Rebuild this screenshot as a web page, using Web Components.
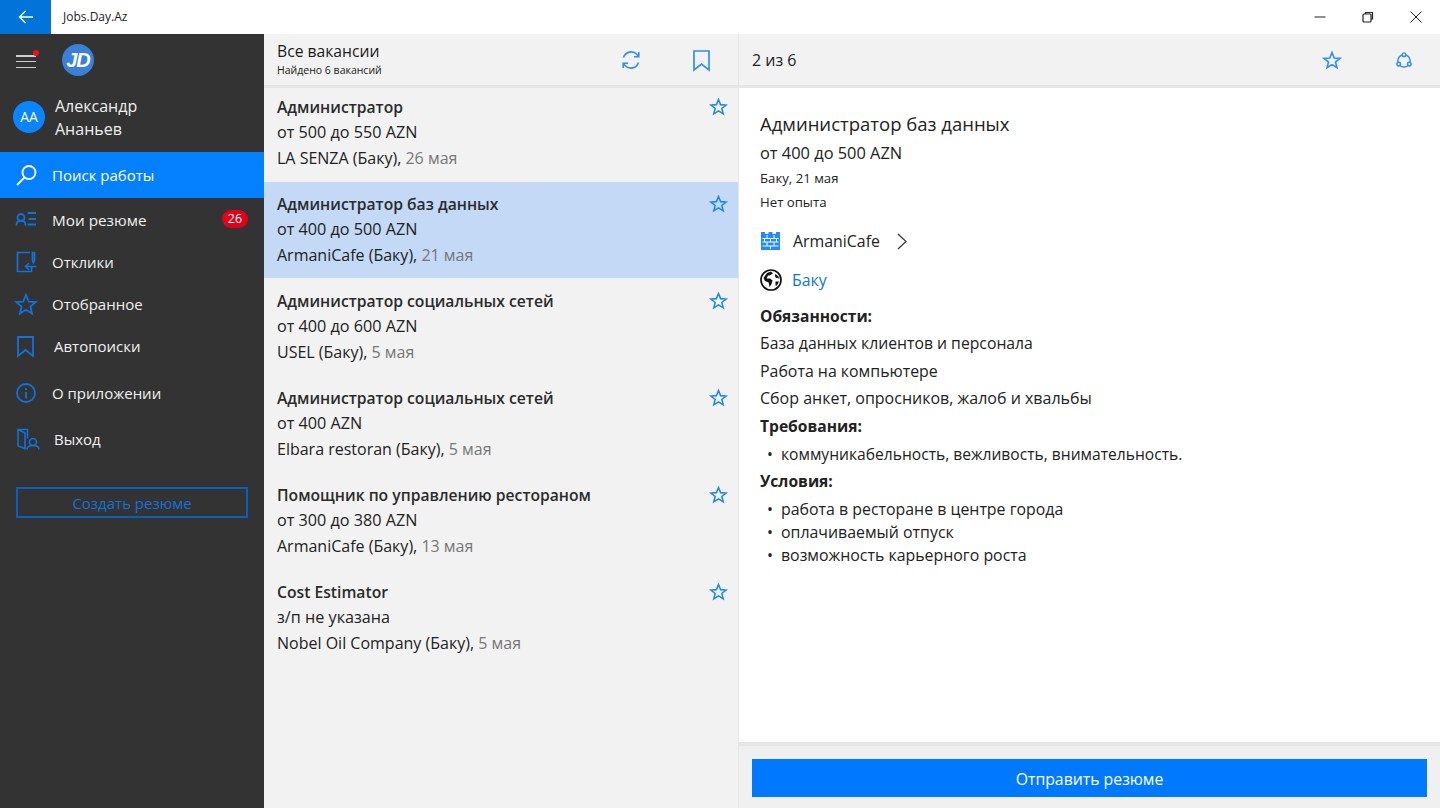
<!DOCTYPE html>
<html lang="ru">
<head>
<meta charset="utf-8">
<title>Jobs.Day.Az</title>
<style>
  html, body { margin: 0; height: 100%; overflow: hidden; background: #fff; }
  body { font-family: "Open Sans", "Noto Sans", sans-serif; color: #1a1a1a; }
</style>
</head>
<body>
<app-shell></app-shell>

<script>
const ICONS = {
  search: `<circle cx="14" cy="8.5" r="6.5"/><path d="M9.5 13.5 2 21"/>`,
  resume: `<circle cx="6" cy="8.500" r="3.500"/><path d="M1.500 16.500c0-3.500 2-5 4.500-5s4.500 1.500 4.500 5M12.500 4H21M13.500 10H21M12.500 15.500H21"/>`,
  replies: `<path d="M15 1.500H2.500v19h14v-5"/><path d="M17.500 1.500h2v8l-1 2-1-2zM21.500 15.500H10.500M14 12l-3.500 3.500L14 19"/>`,
  star: `<path d="M11 2l2.700 6.600 7.100.5-5.500 4.500 1.800 6.900L11 16.700l-6.100 3.800 1.800-6.900L1.200 9.100l7.100-.5z"/>`,
  bookmark: `<path d="M3 2h15v19l-7.500-6L3 21z"/>`,
  info: `<circle cx="11" cy="11" r="9"/><path d="M11 10v6.500M11 6v2"/>`,
  exit: `<path d="M3 18V1.500h9.500v9M3 1.500l7 3.500v15.500l-7-2.500"/><circle cx="18" cy="14" r="3.500"/><path d="M12 21.500c0-2.500 2.500-4 6-4s6 1.500 6 4"/>`,
  refresh: `<path d="M3.500 8.500A8 8 0 0 1 17 5.500l1.500 2M18.500 13.500A8 8 0 0 1 5 16.500l-1.500-2"/><path d="M18.800 3v4.800h-4.800M3.200 19v-4.800h4.800"/>`,
  share: `<circle cx="11" cy="12" r="7.500"/><circle cx="11" cy="4.500" r="2.200" fill="#f2f2f2"/><circle cx="4.500" cy="16" r="2.200" fill="#f2f2f2"/><circle cx="17.500" cy="16" r="2.200" fill="#f2f2f2"/>`,
};

class UiIcon extends HTMLElement {
  connectedCallback() {
    const size = this.getAttribute("size") || 22;
    const box = this.getAttribute("box") || 22;
    const name = this.getAttribute("name");
    this.attachShadow({ mode: "open" }).innerHTML = /* html */`
      <style>
        :host { display: inline-flex; flex: none; }
        svg { display: block; overflow: visible; fill: none; stroke: currentColor; stroke-width: ${this.getAttribute("sw") || 1.8}; }
      </style>
      <svg width="${size}" height="${size}" viewBox="0 0 ${box} ${box}">${ICONS[name]}</svg>
    `;
  }
}
customElements.define("ui-icon", UiIcon);

class TitleBar extends HTMLElement {
  connectedCallback() {
    this.attachShadow({ mode: "open" }).innerHTML = /* html */`
      <style>
        :host { display: flex; height: 34px; background: #fff; align-items: stretch; flex: none; }
        .back { width: 51px; background: #0274d9; display: flex; align-items: center; justify-content: center; }
        .title { font-size: 12px; margin-left: 12px; line-height: 34px; color: #222; flex: 1; }
        .ctl { width: 48px; display: flex; align-items: center; justify-content: center; }
        svg { display: block; fill: none; stroke: #222; }
      </style>
      <div class="back">
        <svg width="16" height="14" viewBox="0 0 16 14" style="stroke:#fff;stroke-width:1.3"><path d="M15 7H1.500M7.500 1 1.500 7l6 6"/></svg>
      </div>
      <div class="title">Jobs.Day.Az</div>
      <div class="ctl"><svg width="12" height="12" viewBox="0 0 12 12"><path d="M.5 6h11"/></svg></div>
      <div class="ctl"><svg width="12" height="12" viewBox="0 0 12 12" style="stroke-width:1.200"><rect x="1" y="3" width="8" height="8" rx="1"/><path d="M3.500 3V1.500h7V8H9"/></svg></div>
      <div class="ctl"><svg width="12" height="12" viewBox="0 0 12 12"><path d="M.5.5l11 11M11.500.5l-11 11"/></svg></div>
    `;
  }
}
customElements.define("title-bar", TitleBar);

class NavItem extends HTMLElement {
  connectedCallback() {
    this.attachShadow({ mode: "open" }).innerHTML = /* html */`
      <style>
        :host { display: flex; align-items: center; color: #f0f0f0; font-size: 15px; height: var(--h, 42px); padding-left: 15px; position: relative; }
        :host([active]) { background: #0580ff; color: #fff; }
        ::slotted([slot=icon]) { color: #1172dc; }
        :host([active]) ::slotted([slot=icon]) { color: #fff; }
        .label { margin-left: var(--gap, 15px); }
        ::slotted([slot=badge]) { position: absolute; right: 16px; top: 11px; }
      </style>
      <slot name="icon"></slot>
      <span class="label"><slot></slot></span>
      <slot name="badge"></slot>
    `;
  }
}
customElements.define("nav-item", NavItem);

class SideNav extends HTMLElement {
  connectedCallback() {
    this.attachShadow({ mode: "open" }).innerHTML = /* html */`
      <style>
        :host { display: flex; flex-direction: column; width: 264px; flex: none; background: #333; color: #eee; }
        .top { height: 52px; display: flex; align-items: center; padding-left: 16px; gap: 26px; flex: none; }
        .burger { position: relative; width: 20px; height: 13px; display: flex; flex-direction: column; justify-content: space-between; margin-top: 3px; }
        .burger i { display: block; height: 1.500px; background: #cfcfcf; }
        .burger b { position: absolute; right: -3px; top: -5px; width: 6px; height: 6px; border-radius: 50%; background: #e81123; }
        .logo { width: 32px; height: 32px; border-radius: 50%; background: #3a7fd8; color: #fff; font: italic 700 20px/32px "Liberation Sans", sans-serif; text-align: center; letter-spacing: -1px; }
        .user { height: 62px; margin-bottom: 4px; display: flex; align-items: center; padding-left: 13px; gap: 10px; font-size: 16px; line-height: 23px; flex: none; }
        .user .name { margin-top: 2px; }
        .ava { width: 32px; height: 32px; border-radius: 50%; background: #0a84ff; color: #fff; font-size: 14px; line-height: 32px; text-align: center; flex: none; }
        .nav { display: flex; flex-direction: column; }
        .create { margin: 28px 16px 0; height: 31px; border: 2px solid #0c5fb6; box-sizing: border-box; color: #1172dc; font-size: 15px; line-height: 28px; text-align: center; }
        .badge { background: #e2001a; color: #fff; font-size: 12.500px; line-height: 18px; height: 18px; width: 26px; border-radius: 9px; text-align: center; }
      </style>
      <div class="top">
        <div class="burger"><i></i><i></i><i></i><b></b></div>
        <div class="logo">JD</div>
      </div>
      <div class="user">
        <div class="ava">АА</div>
        <div class="name">Александр<br>Ананьев</div>
      </div>
      <div class="nav">
        <nav-item active style="--h:46px;--gap:14px"><ui-icon slot="icon" name="search" size="23" box="23"></ui-icon>Поиск работы</nav-item>
        <nav-item style="margin-top:1px;font-size:15.300px"><ui-icon slot="icon" name="resume"></ui-icon>Мои резюме<span slot="badge" class="badge">26</span></nav-item>
        <nav-item><ui-icon slot="icon" name="replies" sw="1.700"></ui-icon>Отклики</nav-item>
        <nav-item><ui-icon slot="icon" name="star"></ui-icon>Отобранное</nav-item>
        <nav-item style="--gap:17px"><ui-icon slot="icon" name="bookmark"></ui-icon>Автопоиски</nav-item>
        <nav-item style="--h:52px"><ui-icon slot="icon" name="info"></ui-icon>О приложении</nav-item>
        <nav-item style="--h:40px;--gap:17px"><ui-icon slot="icon" name="exit" sw="1.600"></ui-icon>Выход</nav-item>
      </div>
      <div class="create">Создать резюме</div>
    `;
  }
}
customElements.define("side-nav", SideNav);

class JobRow extends HTMLElement {
  connectedCallback() {
    const a = (n) => this.getAttribute(n);
    this.attachShadow({ mode: "open" }).innerHTML = /* html */`
      <style>
        :host { display: block; height: 96px; margin-bottom: 1px; box-sizing: border-box; padding: 10px 13px 0; position: relative; font-size: 16px; line-height: 25.500px; color: #222; }
        :host([selected]) { background: #c3d9f5; }
        .name { font-weight: 600; color: #2b2b2b; font-size: 15.700px; line-height: 25px; }
        .pay { font-size: 16.200px; }
        .date { color: #777; }
        ui-icon { position: absolute; right: 11px; top: 13px; color: #1e88f0; }
      </style>
      <div class="name">${a("name")}</div>
      <div class="pay">${a("pay")}</div>
      <div>${a("firm")} <span class="date">${a("date")}</span></div>
      <ui-icon name="star" size="17" box="22" sw="2"></ui-icon>
    `;
  }
}
customElements.define("job-row", JobRow);

class JobList extends HTMLElement {
  connectedCallback() {
    this.attachShadow({ mode: "open" }).innerHTML = /* html */`
      <style>
        :host { display: flex; flex-direction: column; width: 474px; flex: none; background: #f2f2f2; border-right: 1px solid #e6e6e6; }
        .head { height: 54px; box-sizing: border-box; margin-bottom: -3px; position: relative; z-index: 1; background: #f2f2f2; border-bottom: 3px solid #e6e6e6; display: flex; align-items: center; padding-left: 13px; flex: none; }
        .t { flex: 1; font-size: 15.700px; line-height: 19px; }
        .t small { display: block; font-size: 10.500px; line-height: 13px; margin-top: 3px; }
        .head ui-icon { color: #2f8ff5; }
        .refresh { margin-right: 49px; }
        .book { margin-right: 25px; }
      </style>
      <div class="head">
        <div class="t">Все вакансии<small>Найдено 6 вакансий</small></div>
        <ui-icon class="refresh" name="refresh" sw="1.600"></ui-icon>
        <ui-icon class="book" name="bookmark" sw="1.700"></ui-icon>
      </div>
      <slot></slot>
    `;
  }
}
customElements.define("job-list", JobList);

class JobDetail extends HTMLElement {
  connectedCallback() {
    this.attachShadow({ mode: "open" }).innerHTML = /* html */`
      <style>
        :host { display: flex; flex-direction: column; flex: 1; min-width: 0; background: #fff; color: #222; font-size: 15.900px; }
        .head { height: 54px; box-sizing: border-box; background: #f2f2f2; border-bottom: 3px solid #e6e6e6; display: flex; align-items: center; padding-left: 13px; flex: none; }
        .head span { flex: 1; font-size: 16px; }
        .head ui-icon { color: #2f8ff5; }
        .body { flex: 1; padding: 22px 21px 0; min-height: 0; }
        h1 { font-size: 18.500px; font-weight: 400; margin: 0; line-height: 28px; }
        .pay { font-size: 16.400px; line-height: 29px; margin-bottom: -1px; }
        .sm { font-size: 13.200px; line-height: 24px; }
        .link { display: flex; align-items: center; height: 40px; gap: 12px; }
        .blue { color: #0f75d9; }
        h2 { font-size: 15.600px; font-weight: 700; margin: 0; line-height: 24px; }
        p { margin: 0; line-height: 27.500px; }
        ul { margin: 5px 0 0; padding: 0 0 0 21px; list-style: none; line-height: 23px; }
        li { position: relative; }
        li::before { content: "•"; position: absolute; left: -14px; }
        .foot { height: 66px; border-top: 4px solid #e6e6e6; background: #f0f0f0; box-sizing: border-box; padding: 13px 13px 0; flex: none; }
        .send { height: 38px; background: #0078ff; color: #fff; text-align: center; line-height: 41px; font-size: 15.800px; }
      </style>
      <div class="head">
        <span>2 из 6</span>
        <ui-icon name="star" size="18" sw="2" style="margin-right:54px"></ui-icon>
        <ui-icon name="share" size="18" sw="1.800" style="margin-right:27px"></ui-icon>
      </div>
      <div class="body">
        <h1>Администратор баз данных</h1>
        <div class="pay">от 400 до 500 AZN</div>
        <div class="sm">Баку, 21 мая</div>
        <div class="sm">Нет опыта</div>
        <div class="link" style="margin-top:7px">
          <svg width="19" height="18" viewBox="0 0 19 18" style="margin-left:1px;margin-right:1px"><path d="M0 0h4v2h3.500V0h4v2H15V0h4v18H0z" fill="#1e8cff"/><path d="M1.500 6.500h16M1.500 10h16M1.500 14h16M6 3v3.500M13 3v3.500M3.500 6.500V10M9.500 6.500V10M15.500 6.500V10M6 10v4M13 10v4M9.500 14v3" stroke="#fff" stroke-width="1" fill="none"/></svg>
          <span>ArmaniCafe</span>
          <svg width="10" height="17" viewBox="0 0 10 17" fill="none" stroke="#333" stroke-width="1.200" style="margin-left:5px"><path d="M1 1l8 7.500-8 7.500"/></svg>
        </div>
        <div class="link" style="height:38px;gap:10px">
          <svg width="22" height="22" viewBox="0 0 22 22"><circle cx="11" cy="11" r="10" fill="#fff" stroke="#111" stroke-width="1.700"/><path d="M7 4l4-1.500 2 2-3.500 2H8L6.500 9.500h3.500l2.500 2-1 3.500-2 3-.8-4.500-3.700-1.500-1.500-3zM15.500 5l3 2.500.5 2-3-.8-1.200-1.700zM15.500 12.500h3.500l-2 4h-1.500z" fill="#111"/></svg>
          <span class="blue">Баку</span>
        </div>
        <h2 style="margin:5px 0 2px">Обязанности:</h2>
        <p style="font-size:15.750px">База данных клиентов и персонала</p>
        <p>Работа на компьютере</p>
        <p style="font-size:16px">Сбор анкет, опросников, жалоб и хвальбы</p>
        <h2 style="margin-top:1px">Требования:</h2>
        <ul><li style="font-size:15.620px">коммуникабельность, вежливость, внимательность.</li></ul>
        <h2 style="margin-top:3px">Условия:</h2>
        <ul>
          <li>работа в ресторане в центре города</li>
          <li>оплачиваемый отпуск</li>
          <li>возможность карьерного роста</li>
        </ul>
      </div>
      <div class="foot"><div class="send">Отправить резюме</div></div>
    `;
  }
}
customElements.define("job-detail", JobDetail);

class AppShell extends HTMLElement {
  connectedCallback() {
    this.attachShadow({ mode: "open" }).innerHTML = /* html */`
      <style>
        :host { display: flex; flex-direction: column; height: 810px; width: 1440px; box-sizing: border-box; padding-bottom: 2px; }
        .main { flex: 1; display: flex; min-height: 0; }
      </style>
      <title-bar></title-bar>
      <div class="main">
        <side-nav></side-nav>
        <job-list>
          <job-row name="Администратор" pay="от 500 до 550 AZN" firm="LA SENZA (Баку)," date="26 мая"></job-row>
          <job-row selected name="Администратор баз данных" pay="от 400 до 500 AZN" firm="ArmaniCafe (Баку)," date="21 мая"></job-row>
          <job-row name="Администратор социальных сетей" pay="от 400 до 600 AZN" firm="USEL (Баку)," date="5 мая"></job-row>
          <job-row name="Администратор социальных сетей" pay="от 400 AZN" firm="Elbara restoran (Баку)," date="5 мая"></job-row>
          <job-row name="Помощник по управлению рестораном" pay="от 300 до 380 AZN" firm="ArmaniCafe (Баку)," date="13 мая"></job-row>
          <job-row name="Cost Estimator" pay="з/п не указана" firm="Nobel Oil Company (Баку)," date="5 мая"></job-row>
        </job-list>
        <job-detail></job-detail>
      </div>
    `;
  }
}
customElements.define("app-shell", AppShell);
</script>
</body>
</html>
